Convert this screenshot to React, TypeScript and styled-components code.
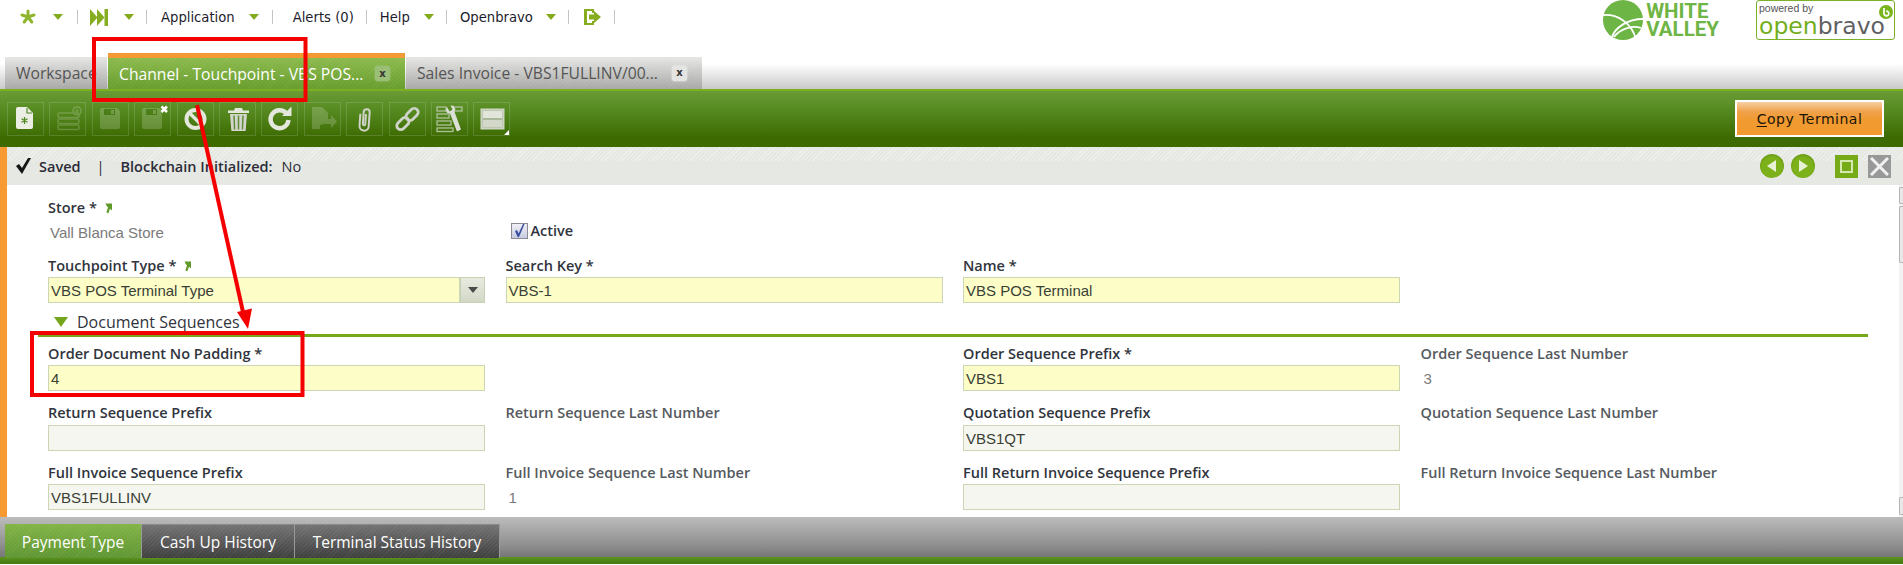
import React from "react";
import styled, { createGlobalStyle, css } from "styled-components";

const GlobalStyle = createGlobalStyle`
  html, body {
    margin: 0;
    padding: 0;
    background: #fff;
    overflow: hidden;
  }
  * {
    box-sizing: border-box;
  }
`;

const uiFont = `"DejaVu Sans", sans-serif`;
const labelFont = `"Open Sans", "DejaVu Sans", sans-serif`;
const fieldFont = `"Liberation Sans", Arial, sans-serif`;

const hatch = css`
  repeating-linear-gradient(135deg, rgba(255, 255, 255, 0.05) 0 1px, transparent 1px 3px)
`;

const Page = styled.div`
  position: relative;
  width: 1903px;
  height: 565px;
  overflow: hidden;
  font-family: ${uiFont};
  font-size: 13px;
  color: #222;
`;

/* top navigation */
const TopBar = styled.header`
  display: flex;
  height: 53px;
  padding-left: 20px;
  background: #fff;
`;

const NavRow = styled.nav`
  display: flex;
  align-items: center;
  height: 34px;
  font-size: 13.2px;
`;

const NavItem = styled.div<{ $gap: number; $pl: number; $pr: number }>`
  display: flex;
  align-items: center;
  gap: ${(p) => p.$gap}px;
  padding: 0 ${(p) => p.$pr}px 0 ${(p) => p.$pl}px;
  height: 14px;
  border-right: 1px solid #c4c4c4;
  color: #1c1c2c;
  white-space: nowrap;
`;

const Caret = styled.span`
  display: block;
  width: 0;
  height: 0;
  border-left: 5.5px solid transparent;
  border-right: 5.5px solid transparent;
  border-top: 6px solid #84ab1e;
`;

const LogoArea = styled.div`
  display: flex;
  margin-left: auto;
  padding-right: 8px;
`;

const ValleyLogo = styled.div`
  display: flex;
  gap: 3px;
  height: 40px;
  margin-right: 37px;
`;

const ValleyName = styled.div`
  font-family: "Roboto", "Liberation Sans", sans-serif;
  font-weight: 700;
  font-size: 20.5px;
  line-height: 18px;
  padding-top: 2px;
  color: #6fb545;
`;

const PoweredBox = styled.div`
  position: relative;
  width: 139px;
  height: 40px;
  border: 1px solid #7bb127;
  border-radius: 3px;
  padding-left: 2px;
  background: #fff;
  overflow: hidden;
`;

const PoweredBy = styled.div`
  font-family: ${fieldFont};
  font-size: 10.5px;
  line-height: 12px;
  padding-top: 1px;
  color: #555;
`;

const WordMark = styled.div`
  font-family: "DejaVu Sans", sans-serif;
  font-size: 23.5px;
  line-height: 24px;
  color: #5f6062;
  b {
    font-weight: 400;
    color: #72ae1c;
  }
`;

const Swirl = styled.svg`
  position: absolute;
  top: 4px;
  right: 1px;
`;

/* document tabs */
const TabBar = styled.div`
  display: flex;
  align-items: flex-end;
  height: 36px;
  padding-left: 5px;
  gap: 1px;
  background: linear-gradient(#fff 0%, #fff 30%, #c9c9c9 100%);
  font-family: ${labelFont};
  font-size: 15.7px;
`;

const DocTab = styled.div<{ $w: number; $active?: boolean }>`
  display: flex;
  align-items: center;
  width: ${(p) => p.$w}px;
  padding-left: 11px;
  white-space: nowrap;
  ${(p) =>
    p.$active
      ? css`
          height: 36px;
          border-top: 5px solid #f49a35;
          color: #fff;
          background: ${hatch}, linear-gradient(#8cba4c, #679d2e);
        `
      : css`
          height: 32px;
          color: #555;
          background: ${hatch}, linear-gradient(#e6e6e4, #a8a8a6);
        `}
`;

const TabTitle = styled.span<{ $w: number }>`
  width: ${(p) => p.$w}px;
  flex: none;
`;

const TabClose = styled.span<{ $dark?: boolean }>`
  display: flex;
  align-items: center;
  justify-content: center;
  width: 15px;
  height: 15px;
  border-radius: 3px;
  background: ${(p) => (p.$dark ? "#9cbf78" : "#e4e4e2")};
  box-shadow: 0 0 2px ${(p) => (p.$dark ? "#a8c888" : "#f4f4f4")};
  color: #333;
  font-family: ${uiFont};
  font-size: 10px;
  font-weight: 700;
  line-height: 1;
`;

/* action toolbar */
const Toolbar = styled.div`
  display: flex;
  align-items: flex-start;
  height: 58px;
  padding: 11px 19px 0 7px;
  border-top: 2px solid #7db01e;
  background: linear-gradient(#6a9b36 0%, #558a20 35%, #3d6b02 82%, #3d6b02 100%);
`;

const ToolGroup = styled.div`
  display: flex;
  gap: 5.4px;
`;

const ToolButton = styled.div`
  position: relative;
  width: 37px;
  height: 34px;
  border: 1px solid rgba(255, 255, 255, 0.14);
`;

const ToolSvg = styled.svg`
  display: block;
  margin: -1px;
`;

const ResizeCorner = styled.span`
  position: absolute;
  right: 0;
  bottom: 0;
  width: 0;
  height: 0;
  border-left: 5px solid transparent;
  border-bottom: 5px solid #fff;
`;

const CopyButton = styled.div`
  display: flex;
  align-items: center;
  justify-content: center;
  width: 149px;
  height: 37px;
  margin-left: auto;
  margin-top: -2px;
  border: 2px solid #fff;
  background: linear-gradient(#f6cfa4 0%, #f0a149 30%, #f09a30 55%, #f09a30 100%);
  color: #1b1408;
  font-size: 14px;
  letter-spacing: 0.5px;
  u {
    text-underline-offset: 2px;
  }
`;

/* status line */
const StatusBar = styled.div`
  display: flex;
  align-items: center;
  height: 38px;
  padding-right: 12px;
  border-left: 7px solid #f89a32;
  font-family: ${labelFont};
  font-size: 14.5px;
  background: repeating-linear-gradient(135deg, rgba(255, 255, 255, 0.35) 0 1px, transparent 1px 3px) top / 100% 14px no-repeat,
    #e6e8e3;
`;

const CheckMark = styled.svg`
  margin-left: 9px;
`;

const StatusStrong = styled.span<{ $ml: number }>`
  margin-left: ${(p) => p.$ml}px;
  font-weight: 600;
  color: #2c2c38;
`;

const StatusText = styled.span<{ $ml: number }>`
  margin-left: ${(p) => p.$ml}px;
  color: #2c2c38;
`;

const StatusTools = styled.div`
  display: flex;
  align-items: center;
  margin-left: auto;
`;

const RoundNav = styled.div`
  display: flex;
  align-items: center;
  justify-content: center;
  width: 24px;
  height: 24px;
  margin-right: 7px;
  border-radius: 50%;
  background: radial-gradient(circle at 50% 55%, #7db11a 55%, #6a9a16 75%, #9aa98a 100%);
`;

const SquareBtn = styled.div<{ $gray?: boolean }>`
  display: flex;
  align-items: center;
  justify-content: center;
  width: 23px;
  height: 23px;
  margin-left: ${(p) => (p.$gray ? 10 : 13)}px;
  background: ${(p) => (p.$gray ? "#989898" : "#76ab17")};
`;

const SquareInner = styled.span`
  display: block;
  width: 13px;
  height: 13px;
  border: 2px solid #d6e8b0;
`;

/* form */
const Body = styled.div`
  display: flex;
  height: 332px;
  overflow: hidden;
  background: #fff;
`;

const SideBand = styled.div`
  flex: none;
  width: 7px;
  background: #f89a32;
`;

const FormArea = styled.main`
  flex: 1;
  padding: 10px 0 0 41px;
  overflow: hidden;
`;

const FormGrid = styled.div<{ $rowGap: number; $mt?: number }>`
  display: grid;
  grid-template-columns: repeat(4, 437px);
  column-gap: 20.5px;
  row-gap: ${(p) => p.$rowGap}px;
  margin-top: ${(p) => p.$mt || 0}px;
`;

const Field = styled.div`
  min-width: 0;
`;

const FieldLabel = styled.div<{ $soft?: boolean }>`
  display: flex;
  align-items: center;
  gap: 7px;
  height: 24px;
  font-family: ${labelFont};
  font-size: 14.5px;
  font-weight: 600;
  color: ${(p) => (p.$soft ? "#555a60" : "#30343c")};
  white-space: nowrap;
`;

const Control = styled.div`
  display: flex;
`;

const TextBox = styled.div<{ $required?: boolean }>`
  flex: 1;
  height: 26px;
  padding: 0 2px;
  border: 1px solid #cdd6b4;
  background: ${(p) => (p.$required ? "#fdfdc7" : "#f4f6ef")};
  font-family: ${fieldFont};
  font-size: 15px;
  line-height: 26px;
  color: #3a3f36;
`;

const ComboButton = styled.div`
  display: flex;
  align-items: center;
  justify-content: center;
  flex: none;
  width: 25px;
  height: 26px;
  border: 1px solid #c8d1b4;
  background: linear-gradient(#e8ebe0, #d2d8c6);
`;

const ComboCaret = styled.span`
  width: 0;
  height: 0;
  border-left: 5px solid transparent;
  border-right: 5px solid transparent;
  border-top: 6px solid #4b4b4b;
`;

const ReadValue = styled.div<{ $indent?: number }>`
  height: 26px;
  padding-left: ${(p) => p.$indent || 2}px;
  font-family: ${fieldFont};
  font-size: 15px;
  line-height: 28px;
  color: #7a7a7a;
`;

const ActiveField = styled.label`
  display: flex;
  align-items: center;
  gap: 3px;
  margin: 27px 0 0 5px;
  height: 17px;
  font-family: ${labelFont};
  font-size: 14.5px;
  font-weight: 600;
  color: #30343c;
`;

const CheckBox = styled.span`
  display: flex;
  align-items: center;
  justify-content: center;
  width: 17px;
  height: 16px;
  border: 1px solid #8a8a92;
  background: linear-gradient(#f0f0f6, #c8cce0);
`;

const SectionHead = styled.div`
  display: flex;
  align-items: center;
  gap: 9px;
  width: 1830px;
  height: 34px;
  margin-left: -10px;
  padding: 6px 0 0 16px;
  border-bottom: 3px solid #77a81b;
  font-family: ${labelFont};
  font-size: 16px;
  font-weight: 500;
  color: #30343c;
`;

const SectionCaret = styled.span`
  width: 0;
  height: 0;
  border-left: 7px solid transparent;
  border-right: 7px solid transparent;
  border-top: 10px solid #74a51c;
`;

const ScrollBar = styled.div`
  display: flex;
  flex-direction: column;
  flex: none;
  width: 4px;
  padding-top: 2px;
  gap: 2px;
  background: #f2f2f2;
`;

const ScrollPiece = styled.div<{ $h: number; $end?: boolean }>`
  height: ${(p) => p.$h}px;
  margin-top: ${(p) => (p.$end ? "auto" : "0")};
  margin-bottom: ${(p) => (p.$end ? "2px" : "0")};
  border: 1px solid #b5b5b5;
  border-right: 0;
  border-radius: 2px 0 0 2px;
  background: #e8e8e8;
`;

/* bottom tabs */
const BottomBar = styled.div`
  display: flex;
  align-items: flex-end;
  height: 47px;
  padding: 0 0 6px 5px;
  background: linear-gradient(#bcbcbc 0%, #8f8f8f 60%, #767676 85%, #5c931f 85.5%, #43780f 100%);
`;

const SubTab = styled.div<{ $w: number; $active?: boolean }>`
  display: flex;
  align-items: center;
  justify-content: center;
  width: ${(p) => p.$w}px;
  height: 34px;
  border-top: 1px solid ${(p) => (p.$active ? "#86b64a" : "#8a8a8a")};
  border-right: 1px solid #999;
  color: #fff;
  font-family: ${labelFont};
  font-size: 15.5px;
  background: ${hatch},
    ${(p) => (p.$active ? "linear-gradient(#81b346, #5f9632)" : "linear-gradient(#737373, #3f3f3f)")};
`;

const Annotations = styled.svg`
  position: absolute;
  left: 0;
  top: 0;
  pointer-events: none;
`;

const OFF = "#f2f4ee";

const MiniArrow = () => (
  <svg width="9" height="13" viewBox="0 0 9 13">
    <path d="M1.5 2.5h6.5v7l-2-1.8-1.6 4.6L2.4 11.6l1.6-5.4-1.2-1z" fill="#5f9a2a" />
  </svg>
);

const Tool = ({ children }: { children: React.ReactNode }) => (
  <ToolSvg width="37" height="34" viewBox="0 0 37 34">
    {children}
  </ToolSvg>
);

const Floppy = () => (
  <g opacity="0.2">
    <path d="M10 6h15l3 3v16a2 2 0 0 1-2 2H10a2 2 0 0 1-2-2V8a2 2 0 0 1 2-2z" fill={OFF} />
    <rect x="12" y="7" width="11" height="6" fill="#2f5a04" />
    <rect x="19" y="8" width="3" height="4" fill={OFF} />
  </g>
);

const toolIcons: React.ReactNode[] = [
  <Tool key="new">
    <path d="M11 5h9l6 6v14a2 2 0 0 1-2 2H11a2 2 0 0 1-2-2V7a2 2 0 0 1 2-2z" fill="#eceee6" />
    <path d="M20 6v5h5" fill="none" stroke="#4f8a20" strokeWidth="1.2" />
    <path d="M17.5 15v7M14.5 16.8l6 3.4M20.5 16.8l-6 3.4" stroke="#4f8a20" strokeWidth="1.3" />
  </Tool>,
  <Tool key="grid">
    <g opacity="0.2">
      <g fill="none" stroke={OFF} strokeWidth="1.6">
        <rect x="9" y="11" width="21" height="4.5" rx="1.5" />
        <rect x="9" y="17" width="21" height="4.5" rx="1.5" />
        <rect x="9" y="23" width="21" height="4.5" rx="1.5" />
        <circle cx="28" cy="9" r="4" />
      </g>
      <path d="M28 7v4M26 9h4" stroke={OFF} strokeWidth="1.2" />
    </g>
  </Tool>,
  <Tool key="save">
    <Floppy />
  </Tool>,
  <Tool key="saveclose">
    <Floppy />
    <path d="M27.5 4.5l5.5 5.5M33 4.5L27.5 10" stroke="#fff" strokeWidth="2.6" />
  </Tool>,
  <Tool key="undo">
    <circle cx="18.5" cy="17" r="9" fill="none" stroke="#e4e7dc" strokeWidth="4" />
    <path d="M12.5 11l12 12" stroke="#e4e7dc" strokeWidth="3.4" />
  </Tool>,
  <Tool key="trash">
    <path d="M9 8.5h21v2.5H9zM15 8.5l1-2.5h7l1 2.5" fill="#e4e7dc" />
    <path d="M11 12h17l-1.4 17H12.4z" fill="#d3d7cb" />
    <path d="M15 13.5l.6 14M19.5 13.5v14M24 13.5l-.6 14" stroke="#5f8b3a" strokeWidth="1.5" />
  </Tool>,
  <Tool key="refresh">
    <path d="M25.5 11.5A9 9 0 1 0 27.5 18" fill="none" stroke="#e4e7dc" strokeWidth="4.4" />
    <path d="M21 14h9.5V4.5z" fill="#e4e7dc" />
  </Tool>,
  <Tool key="export">
    <g opacity="0.2">
      <path d="M8 5h10l6 6v6h-6v6h-2v4H8z" fill={OFF} />
      <path d="M18 17h9v-4l6 6.5-6 6.5v-4h-9z" fill={OFF} />
    </g>
  </Tool>,
  <Tool key="clip">
    <path
      d="M14 12v12a4.6 4.6 0 0 0 9.2 0V10a3 3 0 0 0-6 0v12a1.2 1.2 0 0 0 2.4 0V12"
      fill="none"
      stroke="#cfd3c8"
      strokeWidth="2"
      transform="rotate(4 18 17)"
    />
  </Tool>,
  <Tool key="link">
    <g fill="none" stroke="#cfd3c8" strokeWidth="2.8" transform="rotate(-45 18.5 17)">
      <rect x="5" y="13" width="14" height="8" rx="4" />
      <rect x="18" y="13" width="14" height="8" rx="4" />
    </g>
  </Tool>,
  <Tool key="tools">
    <g fill="none" stroke="#a9bd92" strokeWidth="1.4">
      <rect x="6" y="5" width="9" height="4" />
      <rect x="22" y="5" width="9" height="4" />
      <rect x="6" y="12" width="12" height="4" />
      <rect x="6" y="19" width="14" height="4" />
      <rect x="6" y="26" width="16" height="3.5" />
    </g>
    <path d="M16 5l2.6 4.4 3.2-1.8L19.4 3.4l3 .4 2 3.2-1 2.6L30 27.6 26 29.4 19 11.6l-2.8-.6-1.4-3z" fill="#dcdfd5" />
  </Tool>,
  <Tool key="split">
    <rect x="8.5" y="7.5" width="22" height="19" fill="#a8b898" stroke="#cfd5c5" strokeWidth="2" />
    <rect x="10" y="9" width="19" height="7" fill="#e2e5da" />
    <rect x="10" y="18" width="19" height="7" fill="#d4d8ca" />
  </Tool>,
];

const App: React.FC = () => {
  return (
    <Page>
      <GlobalStyle />
      <TopBar>
        <NavRow>
          <NavItem $pl={0} $pr={14} $gap={17}>
            <svg width="16" height="16" viewBox="0 0 16 16">
              <path d="M8 8V2M8 8l6-2M8 8l3.8 5M8 8l-3.8 5M8 8L2 6" stroke="#8fb52c" strokeWidth="3" strokeLinecap="round" />
            </svg>
            <Caret />
          </NavItem>
          <NavItem $pl={12} $pr={12} $gap={16}>
            <svg width="18" height="17" viewBox="0 0 18 17">
              <path d="M0 0l7.5 8.5L0 17zM7 0l7.5 8.5L7 17z" fill="#86ad1f" />
              <rect x="14.5" y="0" width="3.5" height="17" fill="#86ad1f" />
            </svg>
            <Caret />
          </NavItem>
          <NavItem $pl={14} $pr={13} $gap={14}>
            Application
            <Caret />
          </NavItem>
          <NavItem $pl={20} $pr={12} $gap={0}>
            Alerts (0)
          </NavItem>
          <NavItem $pl={13} $pr={12} $gap={14}>
            Help
            <Caret />
          </NavItem>
          <NavItem $pl={13} $pr={12} $gap={13}>
            Openbravo
            <Caret />
          </NavItem>
          <NavItem $pl={15} $pr={13} $gap={0}>
            <svg width="17" height="16" viewBox="0 0 17 16">
              <path d="M0 0h10v4H8V2H3v12h5v-2h2v4H0z" fill="#86ad1f" />
              <path d="M5 5.5h5V2l7 6-7 6v-3.5H5z" fill="#86ad1f" />
            </svg>
          </NavItem>
        </NavRow>
        <LogoArea>
          <ValleyLogo>
            <svg width="40" height="40" viewBox="0 0 40 40">
              <circle cx="20" cy="20" r="20" fill="#6db545" />
              <path d="M0 15C14 14 28 22 33 39M40 19C24 19 12 28 9 37M11 37C17 29 29 25 38 28" fill="none" stroke="#fff" strokeWidth="1.8" />
            </svg>
            <ValleyName>
              WHITE
              <br />
              VALLEY
            </ValleyName>
          </ValleyLogo>
          <PoweredBox>
            <PoweredBy>powered by</PoweredBy>
            <WordMark>
              <b>open</b>bravo
            </WordMark>
            <Swirl width="14" height="14" viewBox="0 0 14 14">
              <circle cx="7" cy="7" r="7" fill="#7ab51d" />
              <path d="M5 3v5.5a2.4 2.4 0 1 0 2.2-2.4" fill="none" stroke="#fff" strokeWidth="1.7" />
            </Swirl>
          </PoweredBox>
        </LogoArea>
      </TopBar>

      <TabBar>
        <DocTab $w={102}>Workspace</DocTab>
        <DocTab $w={297} $active>
          <TabTitle $w={256}>Channel - Touchpoint - VBS POS...</TabTitle>
          <TabClose $dark>x</TabClose>
        </DocTab>
        <DocTab $w={296}>
          <TabTitle $w={255}>Sales Invoice - VBS1FULLINV/00...</TabTitle>
          <TabClose>x</TabClose>
        </DocTab>
      </TabBar>

      <Toolbar>
        <ToolGroup>
          {toolIcons.map((icon, i) => (
            <ToolButton key={i}>
              {icon}
              {i === 11 && <ResizeCorner />}
            </ToolButton>
          ))}
        </ToolGroup>
        <CopyButton>
          <span>
            <u>C</u>opy Terminal
          </span>
        </CopyButton>
      </Toolbar>

      <StatusBar>
        <CheckMark width="15" height="16" viewBox="0 0 15 16">
          <path d="M0 8l3-2 3 4L12 0h3L6 16z" fill="#151515" />
        </CheckMark>
        <StatusStrong $ml={8}>Saved</StatusStrong>
        <StatusText $ml={16}>|</StatusText>
        <StatusStrong $ml={16}>Blockchain Initialized:</StatusStrong>
        <StatusText $ml={9}>No</StatusText>
        <StatusTools>
          <RoundNav>
            <svg width="10" height="12" viewBox="0 0 10 12">
              <path d="M9 0v12L0 6z" fill="#e8f2d4" />
            </svg>
          </RoundNav>
          <RoundNav>
            <svg width="10" height="12" viewBox="0 0 10 12">
              <path d="M1 0v12l9-6z" fill="#e8f2d4" />
            </svg>
          </RoundNav>
          <SquareBtn>
            <SquareInner />
          </SquareBtn>
          <SquareBtn $gray>
            <svg width="19" height="19" viewBox="0 0 19 19">
              <path d="M1 1l17 17M18 1L1 18" stroke="#f0f0f0" strokeWidth="3" />
            </svg>
          </SquareBtn>
        </StatusTools>
      </StatusBar>

      <Body>
        <SideBand />
        <FormArea>
          <FormGrid $rowGap={8}>
            <Field>
              <FieldLabel>
                Store * <MiniArrow />
              </FieldLabel>
              <ReadValue>Vall Blanca Store</ReadValue>
            </Field>
            <ActiveField>
              <CheckBox>
                <svg width="11" height="13" viewBox="0 0 11 13">
                  <path d="M1 7l2-1 1.6 3.4L9 0h1.6L5 13H3.6z" fill="#3c4fa0" />
                </svg>
              </CheckBox>
              Active
            </ActiveField>
            <span />
            <span />
            <Field>
              <FieldLabel>
                Touchpoint Type * <MiniArrow />
              </FieldLabel>
              <Control>
                <TextBox $required>VBS POS Terminal Type</TextBox>
                <ComboButton>
                  <ComboCaret />
                </ComboButton>
              </Control>
            </Field>
            <Field>
              <FieldLabel>Search Key *</FieldLabel>
              <TextBox $required>VBS-1</TextBox>
            </Field>
            <Field>
              <FieldLabel>Name *</FieldLabel>
              <TextBox $required>VBS POS Terminal</TextBox>
            </Field>
          </FormGrid>

          <SectionHead>
            <SectionCaret />
            Document Sequences
          </SectionHead>

          <FormGrid $rowGap={9.5} $mt={4}>
            <Field>
              <FieldLabel>Order Document No Padding *</FieldLabel>
              <TextBox $required>4</TextBox>
            </Field>
            <span />
            <Field>
              <FieldLabel>Order Sequence Prefix *</FieldLabel>
              <TextBox $required>VBS1</TextBox>
            </Field>
            <Field>
              <FieldLabel $soft>Order Sequence Last Number</FieldLabel>
              <ReadValue $indent={3}>3</ReadValue>
            </Field>

            <Field>
              <FieldLabel>Return Sequence Prefix</FieldLabel>
              <TextBox />
            </Field>
            <Field>
              <FieldLabel $soft>Return Sequence Last Number</FieldLabel>
            </Field>
            <Field>
              <FieldLabel>Quotation Sequence Prefix</FieldLabel>
              <TextBox>VBS1QT</TextBox>
            </Field>
            <Field>
              <FieldLabel $soft>Quotation Sequence Last Number</FieldLabel>
            </Field>

            <Field>
              <FieldLabel>Full Invoice Sequence Prefix</FieldLabel>
              <TextBox>VBS1FULLINV</TextBox>
            </Field>
            <Field>
              <FieldLabel $soft>Full Invoice Sequence Last Number</FieldLabel>
              <ReadValue $indent={3}>1</ReadValue>
            </Field>
            <Field>
              <FieldLabel>Full Return Invoice Sequence Prefix</FieldLabel>
              <TextBox />
            </Field>
            <Field>
              <FieldLabel $soft>Full Return Invoice Sequence Last Number</FieldLabel>
            </Field>
          </FormGrid>
        </FormArea>
        <ScrollBar>
          <ScrollPiece $h={17} />
          <ScrollPiece $h={57} />
          <ScrollPiece $h={18} $end />
        </ScrollBar>
      </Body>

      <BottomBar>
        <SubTab $w={137} $active>Payment Type</SubTab>
        <SubTab $w={153}>Cash Up History</SubTab>
        <SubTab $w={205}>Terminal Status History</SubTab>
      </BottomBar>

      <Annotations width="1903" height="565" viewBox="0 0 1903 565">
        <rect x="94" y="39" width="211.5" height="61" fill="none" stroke="#f50000" strokeWidth="4" />
        <rect x="32" y="333" width="270.5" height="62" fill="none" stroke="#f50000" strokeWidth="4" />
        <path d="M197 105L243 312" stroke="#f50000" strokeWidth="4" />
        <path d="M237 312L252 308.5 248 329z" fill="#f50000" />
      </Annotations>
    </Page>
  );
};

export default App;
